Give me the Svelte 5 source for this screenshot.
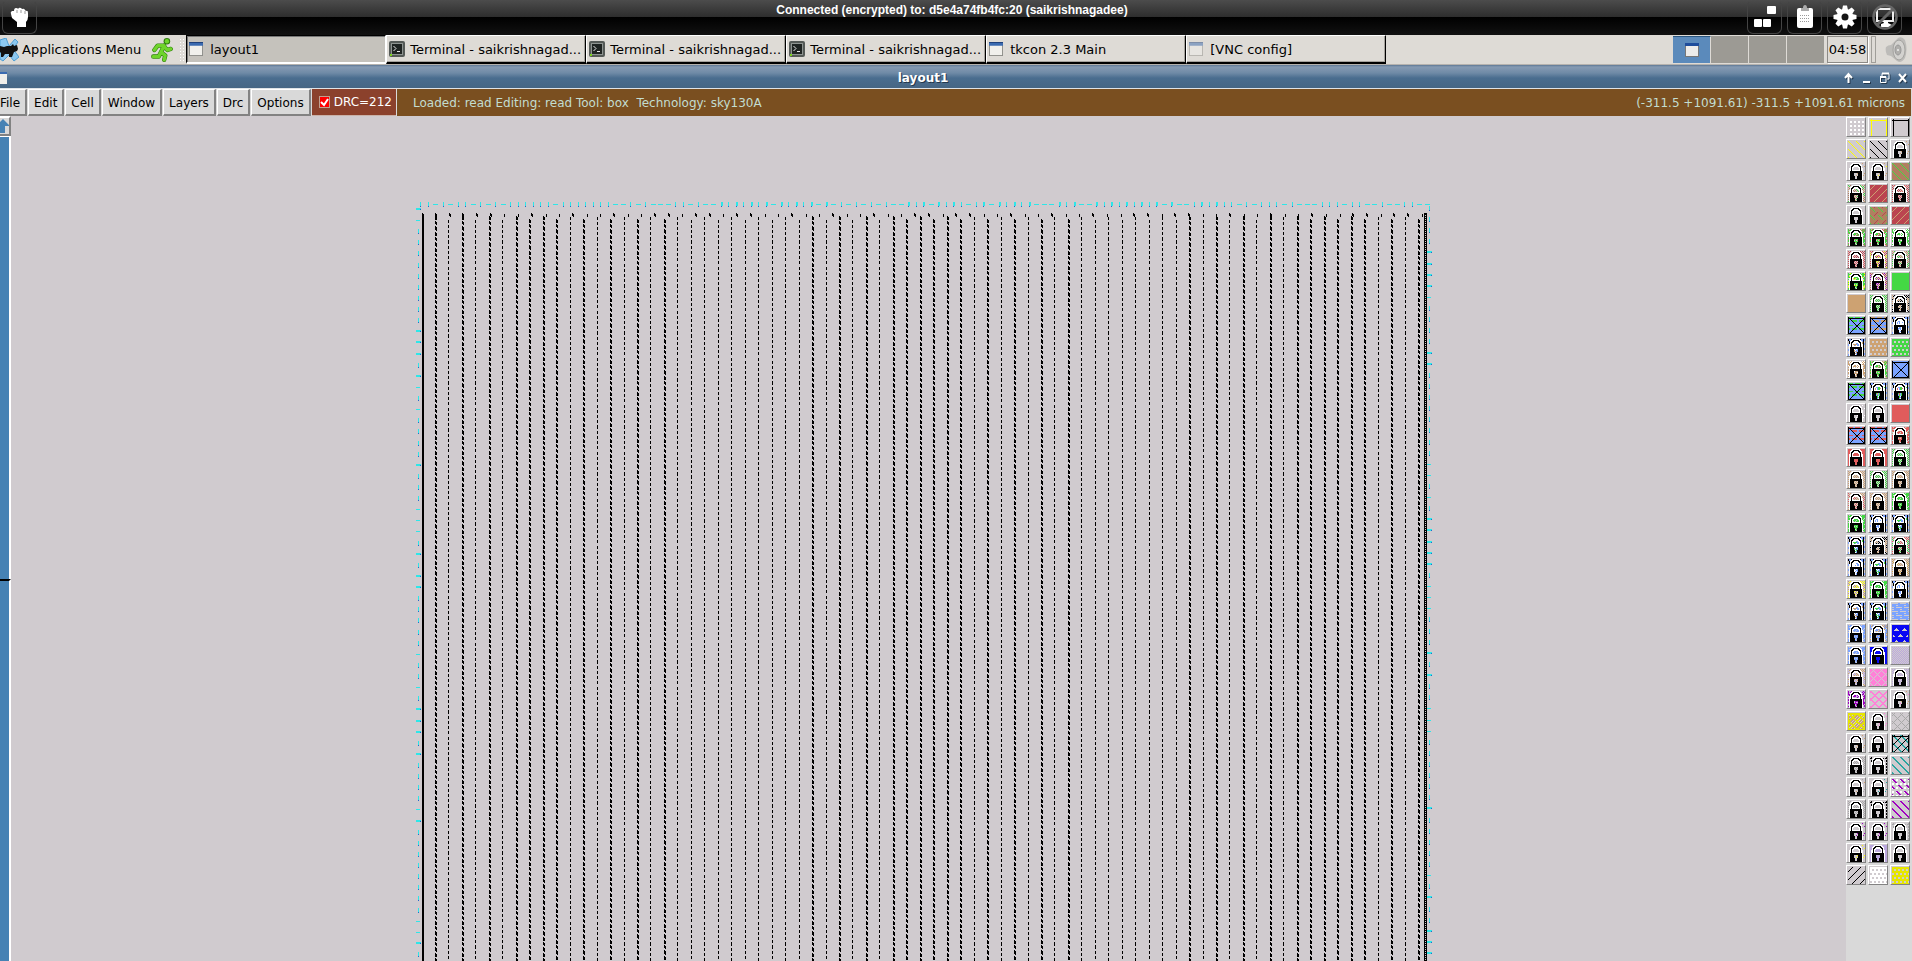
<script>
  // ---------- layout drawing ----------
  const starts = { T: 100, U: 103, t: 101, u: 104 };
  const columnKinds = [
    'TuTuTuTUTUtUtUtUtUtututut',
    'utuTuTuTuTUTUTUtUtUtUtUtutut',
    'utuTuTuTuTtTUTUTUtUtU',
  ].join('');
  const lines = [...columnKinds].map((kind, i) => ({
    x: Math.round(424 + 13.466 * i),
    y: starts[kind],
    thick: kind === 'T' || kind === 'U',
  }));

  const pinKinds = 'bbbbbssbssbssbssbbsbbsbb' + 'ssbssbssbssbbsbbssbssbssbssb' + 'bsbbssbssbssbssbbsbbs';
  const pins = [...pinKinds].map((kind, i) => ({ x: Math.round(424 + 13.69 * i), wide: kind === 'b' }));

  const topKinds = '||-|-||-|-|-||||||-|||||||--|-|---||-|--H|H|H|' +
    'H-H|H|H-H-|-|-|-|--H|H-H|H|-|H-H|H|H---H|H--H|H|H|' +
    'H|H-H--|H|H||-|-|||-|---|||-||--|--||--';
  const leftKinds = 'H-|||||||||HHH|H-|-||||H|||---|H|HH|||||-||-|HHH|H||||-H||||||||--H|';
  const rightKinds = '||||HHHH-||||HH||||||||--|-|HHHHH|---|||H|H||---||||||H|||||-|H||HHH';

  const marks = [];
  [...topKinds].forEach((k, i) => {
    const x = Math.round(409 + 7.513 * i);
    if (k === '-') marks.push([x - 2, 88, 5, 1, 0]);
    else {
      marks.push([x, 86, k === 'H' ? 2 : 1, 4, 0]);
      marks.push([x, 90, 1, 1, 1]);
    }
  });
  function sideMarks(kinds, x, top) {
    [...kinds].forEach((k, i) => {
      const y = Math.round(top + 11.12 * i);
      if (k === '-') marks.push([x, y, 4, 1, 0]);
      else if (k === 'H') {
        marks.push([x, y - 1, 5, 2, 0]);
        marks.push([x + 4, y, 1, 1, 1]);
      } else {
        marks.push([x + 2, y - 2, 1, 4, 0]);
        marks.push([x + 2, y + 2, 1, 1, 1]);
      }
    });
  }
  sideMarks(leftKinds, 405, 93);
  sideMarks(rightKinds, 1416, 92);

  // ---------- layer palette ----------
  const C = {
    g: '#44d844', n: '#b08060', t: '#cda272', r: '#e05c5c', m: '#bb4450', y: '#e6e600', Y: '#ffff00',
    k: '#000000', w: '#ffffff', b: '#7ba3ff', B: '#0808f4', l: '#bba8dd', p: '#ff80d8', u: '#a000c0',
    a: '#a8a8a8', e: '#2aa5a0', o: '#d0a040',
  };
  const hash = (x, y) => ((x * 73 + y * 151 + x * y * 37) >> 1) % 11;
  const pick = (cs, x, y) => cs[hash(x, y) % cs.length];
  const patterns = {
    none: () => null,
    solid: (x, y, c) => c[0],
    chk: (x, y, c) => ((x + y) % 2 ? null : pick(c, x, y)),
    dense: (x, y, c) => ((x + y) % 2 ? (hash(x, y) > 4 ? c[0] : null) : pick(c, x, y)),
    sparse: (x, y, c) => ((x * 2 + y) % 7 === 0 && hash(x, y) > 2 ? pick(c, x, y) : null),
    back: (x, y, c) => ((x - y + 24) % 8 === 0 ? c[0] : c[1] || null),
    back2: (x, y, c) => ((x - y + 32) % 8 < 2 ? c[0] : c[1] || null),
    fwd: (x, y, c) => ((x + y) % 8 === 4 ? c[0] : c[1] || null),
    mixed: (x, y, c) => ((x - y + 24) % 8 === 0 && y % 8 < 5 ? c[0] : (x + y) % 8 === 4 && x % 8 > 3 ? c[1] : c[2]),
    grid: (x, y, c) => (x % 4 > 1 && y % 4 > 1 ? c[0] : null),
    holes: (x, y, c) => (y % 4 > 1 && (x + (y % 8 > 3 ? 2 : 0)) % 4 > 1 ? null : c[0]),
    frame: (x, y, c) => (x === 1 || x === 16 || y === 1 ? c[0] : null),
    cross: (x, y, c) => (x === 0 || y === 1 || x === 16 || y === 16 || x === y || x + y === 17 ? 'k' : (y % 4 === 0 || y % 8 === 3) && (x + (y % 8 ? 3 : 0)) % 7 < 5 ? c[1] : c[0]),
    vert: (x, y, c) => (y < 2 ? (x % 3 ? c[0] : 'k') : x === 1 || x === 15 || (y < 3 && x > 2 && x < 14) ? 'k' : x === 0 || x === 16 ? ((y + x) % 5 < 2 ? 'b' : null) : pick(c + 'w', x, y)),
    dots: (x, y, c) => ((x === 1 || x === 16 || y === 1) && (x + y) % 3 !== 0 ? c[0] : null),
    waves: (x, y, c) => ((y % 4 === 0 && (x + y) % 8 < 6) || (y % 4 === 2 && (x + y) % 8 > 5) ? null : c[0]),
    tri: (x, y, c) => {
      const v = y % 6, h = (x + (y % 12 > 5 ? 4 : 0)) % 8;
      return v > 2 && x > 0 && x < 16 && Math.abs(h - 4) < v - 2 ? null : c[0];
    },
    lattice: (x, y, c) => ((x + y) % 8 === 2 || (x - y + 24) % 8 === 0 ? c[0] : null),
    rings: (x, y, c) => ((x + y) % 8 < 2 || (x - y + 24) % 8 < 2 ? c[0] : null),
    spots: (x, y, c) => ((x + y) % 2 === 0 && ((x + y) % 8 === 4 || (x - y + 24) % 8 === 2) ? null : c[0]),
    blotch: (x, y, c) => (x < 1 || x > 15 || y < 2 || y > 15 ? c[0] : (x + y) % 8 < 2 || (x - y + 24) % 8 < 2 ? c[0] : (x + y) % 3 ? c[1] : null),
    hatch: (x, y, c) => (x === 0 || x === 16 || y === 1 ? 'k' : (x + y) % 8 === 2 ? 'k' : (x - y + 24) % 8 < 2 ? c[0] : null),
    check: (x, y, c) => ((x + y) % 2 ? null : c[0]),
    weave: (x, y, c) => ((x - y + 24) % 8 < 2 && y % 6 < 4 ? c[0] : x % 4 < 2 && y % 4 < 2 ? c[1] : null),
  };

  // W outline, B body, any other character shows the layer pattern
  const lockMap = [
    '....WWWWWWWW.....',
    '...WWBBBBBBWW....',
    '..WWBBWWWWBBWW...',
    '..WBBWWWWWWBBW...',
    '..WBWW....WWBW...',
    '.WWBW......WBWW..',
    '.WWBW......WBWW..',
    '.WWBWWWWWWWWBWW..',
    '.WBBBBBBBBBBBBW..',
    '.WBBBBBBBBBBBBW..',
    '.WBBBB....BBBBW..',
    '.WBBBB....BBBBW..',
    '.WBBBB....BBBBW..',
    '.WBBBBB..BBBBBW..',
    '.WBBBBB..BBBBBW..',
    '.WBBBBB..BBBBBW..',
    '.WBBBBBBBBBBBBW..',
  ];

  // "*" marks a locked layer; then pattern name and colour keys
  const layers = `grid:w frame:Y frame:k|back:Y back:k *sparse:t|*sparse:t *sparse:Yt back:gn
*chk:gnt fwd:tm *chk:mr|*none: mixed:gmn fwd:tm|*dense:gn *dense:gr *dense:gw
*chk:rm *chk:rmy *chk:tgn|*dense:gYg *chk:mnu solid:g|solid:t *chk:g *chk:tk
cross:bg cross:bt *vert:b|*vert:bt holes:t holes:g|*dense:tw *dense:gt cross:bb
cross:bg *vert:bgt *vert:bgr|*sparse:w *none: solid:r|cross:br cross:br *dense:rrt
*solid:r *solid:r *chk:g|*chk:t *chk:g *chk:t|*chk:rt *chk:t *dense:g
*dense:g *vert:b *vert:bg|*vert:bg *chk:tk *chk:gr|*vert:bw *vert:bg *chk:ot
*chk:tY *dense:g *vert:b|*vert:bt *vert:bg waves:b|*dense:b *dense:bt tri:B
*dense:b *solid:B check:l|*chk:lt spots:p *chk:l|*dense:ul rings:p *sparse:pt
blotch:yt *sparse:p lattice:a|*sparse:t *none: hatch:e|*chk:a *dots:k back2:e
*sparse:ta *sparse:e weave:uw|*chk:a *dots:k back2:u|*sparse:u *sparse:u *dots:a
*sparse:Y *solid:l *none:|fwd:k holes:w holes:y`.split(/[|\n]/).flatMap((row) => row.split(' '));

  function drawLayer(spec) {
    const locked = spec[0] === '*';
    const [name, keys] = spec.replace('*', '').split(':');
    const fill = patterns[name];
    const paths = {};
    for (let y = 0; y < 17; y++) {
      for (let x = 0; x < 17; x++) {
        const m = locked ? lockMap[y][x] : '.';
        const key = m === 'W' ? 'w' : m === 'B' ? 'k' : fill(x, y, keys);
        if (!key) continue;
        paths[key] = (paths[key] || '') + `M${x} ${y}h1v1h-1z`;
      }
    }
    return Object.entries(paths).map(([key, d]) => ({ color: C[key], d }));
  }
  const swatches = layers.map((spec) => ({ spec, paths: drawLayer(spec) }));

  const tasks = [
    { name: 'layout1', icon: 'window', active: true },
    { name: 'Terminal - saikrishnagad...', icon: 'terminal' },
    { name: 'Terminal - saikrishnagad...', icon: 'terminal' },
    { name: 'Terminal - saikrishnagad...', icon: 'terminal' },
    { name: 'tkcon 2.3 Main', icon: 'window' },
    { name: '[VNC config]', icon: 'window', faded: true },
  ];
  const menus = ['File', 'Edit', 'Cell', 'Window', 'Layers', 'Drc', 'Options'];
</script>

{#snippet windowIcon()}
  <svg width="14" height="14" viewBox="0 0 15 15">
    <rect x="0.5" y="0.5" width="14" height="14" fill="#f1f0ec" stroke="#8d8d89" />
    <rect width="15" height="4" fill="#3a6ab0" />
    <rect y="0" width="15" height="1" fill="#1d3f78" />
  </svg>
{/snippet}

<div class="desktop">
  <header class="novnc">
    <button class="tool" aria-label="Move viewport">
      <svg width="22" height="22" viewBox="0 0 22 22">
        <path fill="#fff" d="M2 8Q1 6 3 5L5 5Q5 2 7 2T9 3Q10 1 12 2L13 3Q15 2 16 4L17 5Q19 4 19 7L19 11Q19 14 17 16V21H8V16L3 12Z" />
        <path stroke="#999" fill="none" d="M8 4V7M12 4V7M16 5V8" />
      </svg>
    </button>
    <p class="status">Connected (encrypted) to: d5e4a74fb4fc:20 (saikrishnagadee)</p>
    <div class="tools">
      <button class="tool" aria-label="Extra keys">
        <svg width="24" height="24" viewBox="0 0 24 24" fill="#fff">
          <rect x="14" y="1" width="9" height="8" rx="1" /><rect x="1" y="14" width="8" height="8" rx="1" /><rect x="10" y="14" width="8" height="8" rx="1" />
        </svg>
      </button>
      <button class="tool" aria-label="Clipboard">
        <svg width="24" height="24" viewBox="0 0 24 24">
          <rect x="4" y="3" width="16" height="20" rx="2" fill="#fff" />
          <path d="M8 3H10Q10 0 12 0T14 3H16V6H8Z" fill="#aaa" />
          <path stroke="#999" stroke-dasharray="1 1" d="M7 10.500H17M7 13.500H17M7 16.500H17" />
        </svg>
      </button>
      <button class="tool" aria-label="Settings">
        <svg width="24" height="24" viewBox="-12 -12 24 24" fill="#fff">
          {#each [0, 45, 90, 135] as angle}
            <path d="M-2 -11.500H2L3 -7V7L2 11.500H-2L-3 7V-7Z" transform="rotate({angle})" />
          {/each}
          <circle r="8" /><circle r="3.500" fill="#151515" />
        </svg>
      </button>
      <button class="tool" aria-label="Disconnect">
        <svg width="26" height="26" viewBox="0 0 26 26">
          <rect x="5" y="5" width="16" height="12" fill="none" stroke="#eee" stroke-width="2" />
          <path fill="#fff" d="M11 17H16V19L20 21V23H9V20L12 19Z" />
          <circle cx="13" cy="13" r="11.500" fill="none" stroke="#666" stroke-width="2.500" />
          <path stroke="#666" stroke-width="3" d="M21 5L5 21" />
        </svg>
      </button>
    </div>
  </header>

  <nav class="panel">
    <button class="apps">
      <svg width="19" height="24" viewBox="0 0 19 24">
        <path fill="#8cc8f0" stroke="#4f9fd4" d="M0 2L6 0L9 8L15 1L18 4L13 11L19 19L14 23L9 17L3 23L0 21Z" />
        <path fill="#111" d="M0 8L4 9L7 8L11 8L13 6L14 8L17 7L18 11L17 13L14 14L12 19H9L9 16L5 16L3 19H1V15L0 14Z" />
      </svg>
      Applications Menu
    </button>
    <svg class="runner" width="22" height="24" viewBox="0 0 20 22">
      <g fill="none" stroke="#2f7d0c" stroke-width="4" stroke-linejoin="round" stroke-linecap="round"><path d="M12 7L9 13L13 16L12 20M9 13L7 17H2M12 7L6 7L3 11M12 8L15 11L18 10" /></g>
      <circle cx="14.500" cy="3" r="3" fill="#2f7d0c" />
      <g fill="none" stroke="#6fd42c" stroke-width="3" stroke-linejoin="round" stroke-linecap="round"><path d="M12 7L9 13L13 16L12 20M9 13L7 17H2M12 7L6 7L3 11M12 8L15 11L18 10" /></g>
      <circle cx="14.500" cy="3" r="2" fill="#6fd42c" />
    </svg>
    <span class="grip"></span>
    <div class="tasks">
      {#each tasks as task}
        <button class="task" class:active={task.active}>
          <span class="task-icon" class:faded={task.faded}>
            {#if task.icon === 'window'}
              {@render windowIcon()}
            {:else}
              <svg width="16" height="16" viewBox="0 0 16 16">
                <rect width="16" height="16" rx="2" fill="#555a57" />
                <rect x="2.500" y="2.500" width="11" height="11" fill="#1f2422" stroke="#8f9592" />
                <path fill="none" stroke="#e8e8e8" d="M4.500 5L7 7.500L4.500 10M8 10.500H11" />
                <rect x="1" y="13" width="2" height="2" fill="#79d01c" />
              </svg>
            {/if}
          </span>
          {task.name}
        </button>
      {/each}
    </div>
    <div class="pager">
      <button class="desk current" aria-label="Workspace 1">
        <svg width="14" height="14" viewBox="0 0 14 14"><rect x="0.500" y="0.500" width="13" height="13" fill="#edecea" stroke="#777" /><rect width="14" height="3" fill="#1e4d9c" /></svg>
      </button>
      <button class="desk" aria-label="Workspace 2"></button>
      <button class="desk" aria-label="Workspace 3"></button>
      <button class="desk" aria-label="Workspace 4"></button>
    </div>
    <time class="clock">04:58</time>
    <span class="handle"></span>
    <svg class="speaker" width="22" height="28" viewBox="0 0 22 28">
      <path fill="#bdbcb9" d="M1 11Q3 9 6 9L13 2Q17 0 20 4Q23 13 20 22Q16 28 12 25L6 20L2 19Q0 15 1 11Z" />
      <ellipse cx="14" cy="14" rx="6" ry="10" fill="#d3d2cf" stroke="#a3a29f" /><ellipse cx="13" cy="14" rx="3" ry="5" fill="#b0afac" stroke="#999" /><circle cx="13" cy="14" r="1" fill="#eee" />
    </svg>
  </nav>

  <div class="titlebar">
    <span class="title-icon"></span>
    <h1>layout1</h1>
    <div class="controls">
      <button aria-label="Shade"><svg width="11" height="12" viewBox="0 0 11 12"><path d="M5.500 11V2M2 6L5.500 2L9 6" fill="none" stroke="#fff" stroke-width="2" /></svg></button>
      <button aria-label="Minimize"><svg width="11" height="12" viewBox="0 0 11 12"><rect x="2" y="9" width="7" height="2" fill="#fff" /></svg></button>
      <button aria-label="Restore"><svg width="11" height="12" viewBox="0 0 11 12"><path d="M3 4V1.500H10V7H8M1.500 5V10.500H7V5Z" fill="none" stroke="#fff" stroke-width="1" /><path d="M3 1.500H10M1 5H7" stroke="#fff" stroke-width="2" /></svg></button>
      <button aria-label="Close"><svg width="11" height="12" viewBox="0 0 11 12"><path d="M2 2L9 10M9 2L2 10" stroke="#fff" stroke-width="2" /></svg></button>
    </div>
  </div>

  <div class="menubar">
    {#each menus as menu}
      <button class="menu">{menu}</button>
    {/each}
    <label class="drc"><input type="checkbox" checked />DRC=212</label>
    <div class="info">
      <span>Loaded: read Editing: read Tool: box&nbsp; Technology: sky130A</span>
      <span>(-311.5 +1091.61) -311.5 +1091.61 microns</span>
    </div>
  </div>

  <main class="work">
    <div class="scroll">
      <button class="up" aria-label="Scroll up">
        <svg width="9" height="14" viewBox="0 0 9 14"><path fill="#4682b4" d="M3 0L9 6V7H5V14H0V3Z" /></svg>
      </button>
      <div class="trough"><span class="thumb"></span><span class="thumb"></span></div>
    </div>

    <svg class="view" shape-rendering="crispEdges">
      <defs>
        <pattern id="thin" width="1" height="47" patternUnits="userSpaceOnUse">
          <path d="M0 0h1v3h-1zM0 5h1v3h-1zM0 10h1v3h-1zM0 15h1v3h-1zM0 20h1v4h-1zM0 26h1v3h-1zM0 31h1v3h-1zM0 36h1v3h-1zM0 41h1v3h-1z" />
        </pattern>
        <pattern id="thick" width="2" height="47" patternUnits="userSpaceOnUse">
          <path d="M0 0h1v4h-1zM0 5h1v3h-1zM0 10h1v4h-1zM0 16h1v4h-1zM0 21h1v3h-1zM0 26h1v4h-1zM0 32h1v4h-1zM0 37h1v3h-1zM0 42h1v3h-1z" />
          <path d="M1 1h1v3h-1zM1 6h1v3h-1zM1 11h1v4h-1zM1 17h1v3h-1zM1 22h1v3h-1zM1 27h1v4h-1zM1 33h1v3h-1zM1 38h1v3h-1zM1 43h1v3h-1z" />
        </pattern>
      </defs>
      {#each marks as [x, y, w, h, dark]}
        <rect {x} {y} width={w} height={h} fill={dark ? '#2866c8' : '#2ee6e8'} />
      {/each}
      <rect x="411" y="97" width="1" height="100%" /><rect x="412" y="98" width="1" height="100%" />
      {#each lines as line}
        <g transform="translate({line.x} {line.y})">
          <rect width={line.thick ? 2 : 1} height="100%" fill={line.thick ? 'url(#thick)' : 'url(#thin)'} />
        </g>
      {/each}
      {#each pins as pin}
        {#if pin.wide}<rect x={pin.x} y="97" width="1" height="3" />{/if}
        <rect x={pin.x + 1} y="98" width="1" height="3" />
      {/each}
      <rect x="1413" y="97" width="3" height="100%" />
      <line x1="1414.500" x2="1414.500" y1="99" y2="100%" stroke="#d0cbcf" stroke-dasharray="1 1" />
    </svg>

    <aside class="palette">
      {#each swatches as swatch}
        <button class="layer" aria-label="Layer">
          <svg width="17" height="17" viewBox="0 0 17 17" shape-rendering="crispEdges">
            {#each swatch.paths as path}<path d={path.d} fill={path.color} />{/each}
          </svg>
        </button>
      {/each}
    </aside>
  </main>
</div>

<style>
  :global(body) { margin: 0; background: #d0cbcf; }
  .desktop {
    display: flex; flex-direction: column; height: 100vh; overflow: hidden;
    font-family: "DejaVu Sans", sans-serif; font-size: 13px; color: #000;
  }
  button { margin: 0; padding: 0; border: 0; background: none; font: inherit; color: inherit; white-space: nowrap; }
  svg { display: block; flex: none; }

  .novnc {
    display: grid; grid-template-columns: 1fr auto 1fr; height: 35px; flex: none;
    background: linear-gradient(#4c4c4c, #2d2d2d 17px, #000 17px, #111);
  }
  .tool {
    display: grid; place-items: center; box-sizing: border-box; width: 35px; height: 34px;
    border: 1px solid #444; border-top-color: transparent; border-radius: 6px;
  }
  .novnc > .tool { margin-left: 2px; }
  .tools { display: flex; justify-content: flex-end; gap: 5px; padding-right: 10px; }
  .status { margin: 0; padding-right: 8px; font: bold 12px/20px "Liberation Sans", sans-serif; color: #fff; }

  .panel {
    display: flex; align-items: center; height: 30px; flex: none; background: #dedbd6;
    border-bottom: 1px solid #b5b2ae; box-sizing: border-box;
  }
  .apps { display: flex; align-items: center; gap: 3px; }
  .runner { margin-left: 10px; }
  .grip { width: 5px; height: 24px; margin: 0 2px 0 6px; background: radial-gradient(#fff 1px, transparent 1px) 0 0 / 3px 3px; }
  .tasks { display: grid; grid-template-columns: repeat(6, 200px); height: 29px; flex: 1; }
  .task {
    display: flex; align-items: center; gap: 4px; padding-left: 2px; text-align: left; overflow: hidden;
    border: 1px solid #fff; border-right: 1px solid #000; border-bottom: 2px solid #000;
    box-shadow: inset -1px -1px #a5a29d;
  }
  .task.active { background: #c5c2bc; border-color: #000 #fff #fff #000; box-shadow: inset 1px 1px #777; }
  .task-icon { display: flex; width: 17px; }
  .faded { opacity: 0.5; }
  .pager { display: flex; height: 27px; }
  .desk { display: grid; place-items: center; width: 38px; background: #9c9a94; border-right: 1px solid #dedbd6; box-sizing: border-box; }
  .desk.current { background: #5b8abb; border-top: 1px solid #2b567f; }
  .clock { margin-left: 2px; width: 39px; height: 25px; line-height: 25px; border: 1px solid #8c8a86; text-align: center; box-shadow: 1px 1px #fff; }
  .handle { width: 3px; height: 25px; margin: 0 9px 0 3px; border: 1px solid #a09e99; }
  .speaker { margin-right: 5px; }

  .titlebar {
    display: grid; grid-template-columns: 1fr auto 1fr; align-items: center; height: 24px; flex: none; box-sizing: border-box;
    background: linear-gradient(#5d7794, #859ab3 2px, #6f8aa6 8px, #4a6d8f 13px, #466684);
    border-bottom: 1px solid #dfe3e6; padding: 2px 4px 0 0;
  }
  .title-icon { width: 7px; height: 10px; background: #efeeea; border-top: 2px solid #3a6ab0; }
  h1 { margin: 0; padding-right: 62px; font-size: 12px; font-weight: bold; color: #fff; text-shadow: 1px 1px #24384d; }
  .controls { display: flex; justify-content: flex-end; gap: 7px; filter: drop-shadow(1px 1px #24384d); }

  .menubar { display: flex; height: 27px; flex: none; background: #d9d9d9; font-size: 12px; gap: 1px; box-sizing: border-box; }
  .menu {
    padding: 1px 5px 0; background: #d9d9d9; border: 1px solid #fff; border-right: 2px solid #828282; border-bottom: 2px solid #828282;
  }
  .menu:first-child { padding-left: 0; border-left: 0; }
  .drc { display: flex; align-items: center; gap: 4px; padding: 0 4px 0 7px; background: #8b412c; color: #fff; border-bottom: 1px solid #c9b2a9; }
  .drc input {
    appearance: none; width: 11px; height: 12px; margin: 0; box-sizing: border-box; border: 1px solid #c0a090;
    background: url("data:image/svg+xml,%3Csvg xmlns='http://www.w3.org/2000/svg' viewBox='0 0 9 10'%3E%3Cpath d='M1 5L4 8L8 2' fill='none' stroke='white' stroke-width='2'/%3E%3C/svg%3E") red;
  }
  .info {
    display: flex; flex: 1; align-items: center; justify-content: space-between; margin-right: 1px;
    padding: 0 6px 0 16px; background: #7a4f20; color: #c3ddd0;
  }

  .work { display: flex; flex: 1; min-height: 0; background: #d0cbcf; }
  .scroll { display: flex; flex-direction: column; width: 11px; background: #d9d9d9; }
  .up { display: flex; align-items: center; height: 20px; box-sizing: border-box; border: solid; border-width: 2px 2px 2px 0; border-color: #fff #828282 #828282; }
  .trough { display: flex; flex: 1; flex-direction: column; }
  .thumb { flex: 536 1 0; background: #4682b4; border-right: 2px solid #fff; border-top: 1px solid #fff; }
  .thumb + .thumb { flex-grow: 460; border-top: 2px solid #000; }
  .view { flex: 1; min-width: 0; height: 100%; }
  .palette {
    display: grid; grid-template-columns: repeat(3, 22px); grid-auto-rows: 22px; align-content: start;
    background: #d9d9d9; padding: 1px 0 0;
  }
  .layer {
    display: grid; place-items: center; width: 20px; height: 20px; background: #d0cbcf;
    border: 1px solid #fff; border-right-color: #828282; border-bottom-color: #828282; box-sizing: border-box;
  }
</style>
